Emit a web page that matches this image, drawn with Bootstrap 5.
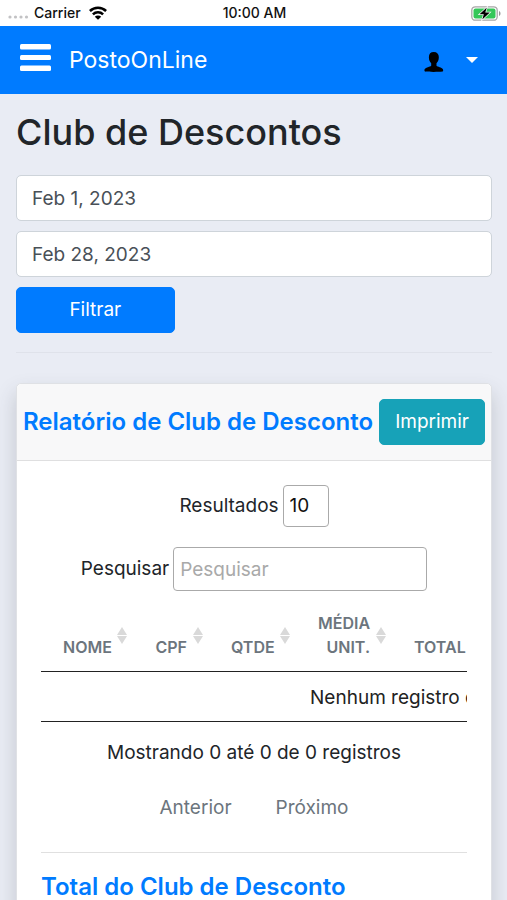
<!DOCTYPE html>
<html lang="pt-BR">
<head>
<meta charset="utf-8">
<meta name="viewport" content="width=device-width, initial-scale=1">
<title>PostoOnLine</title>
<link href="https://cdn.jsdelivr.net/npm/bootstrap@5.3.0/dist/css/bootstrap.min.css" rel="stylesheet">
<style>
body{font-family:Inter,"Liberation Sans",sans-serif;font-size:19px;line-height:30px;color:#212529;background:#e9ecf4}
.status{height:26px;font-size:14px;line-height:26px;font-weight:500;color:#111;padding:0 6px 0 8px}
.status>div{flex:1 1 0}
.topbar{background:#007bff;height:68px;padding:0 20px}
.brand{font-size:23px;margin-left:18px;color:#fff}
.account{gap:22px;margin-right:9px}
.page{padding:16px 15px 0 16px}
.page-title{font-size:36px;line-height:44px;font-weight:500;margin-bottom:21px}
.field{font-size:19px;line-height:32px;height:46px;padding:7px 15px;border-color:#ced4da;border-radius:5px;color:#495057;margin-bottom:10px}
.btn{font-size:19px;line-height:32px;height:46px;border-radius:5px;--bs-btn-padding-x:15px}
.btn-filter{width:33.333%;background:#007bff;border-color:#007bff}
.btn-print{background:#17a2b8;border-color:#17a2b8;color:#fff}
.rule{margin:19px 0 30px;border-color:#000;opacity:.04}
.panel{border:1px solid #dfe1e5;border-radius:5px;box-shadow:0 10px 20px rgba(58,65,75,.22)}
.panel-head{background:#f8f8f9;border-bottom:1px solid #dfdfe0;padding:15px 6px;border-radius:5px 5px 0 0}
.panel-title{font-size:24px;line-height:30px;font-weight:600;color:#007bff;margin:0}
.panel-content{padding:24px}
.control{border:1px solid #aaa;border-radius:4px;background:#fff;color:#111;padding:5px 6px;font-size:19px;line-height:30px}
.count{appearance:none;width:46px;height:42px}
.search{width:254px;height:44px}
.search::placeholder{color:#a9a9a9}
.report{table-layout:fixed;width:796px;margin:0}
.report th{position:relative;padding:12px 22px;font-size:16px;line-height:24px;font-weight:600;color:#6c757d;text-align:right;vertical-align:bottom;border-bottom:1px solid #222}
.report td{padding:11px 10px 9px;line-height:29px;border-bottom:1px solid #222;text-align:center;color:#222}
.report svg{position:absolute;right:6px;bottom:27px}
.c-name{width:92px}.c-cpf{width:76px}.c-qty{width:87px}.c-avg{width:96px}.c-total{width:95px}
.info{margin-top:16px}
.pager{margin-top:17px}
.pager .page-link{border:0;padding:8px 22px;color:#6c757d;background:none;line-height:30px;font-size:19px}
.divider{margin:21px 0 19px;border-color:#000;opacity:.12}
</style>
<script src="https://cdn.jsdelivr.net/npm/bootstrap@5.3.0/dist/js/bootstrap.bundle.min.js" defer></script>
</head>
<body>
<svg class="d-none"><symbol id="sort" viewBox="0 0 10 17"><path fill="#d9d9d9" d="M5 0 10 8H0zM0 9h10l-5 8z"/></symbol></svg>
<div class="status bg-white d-flex align-items-center">
  <div class="d-flex align-items-center">
    <svg width="22" height="26" fill="#c2c2c4" aria-hidden="true"><circle cx="2" cy="17" r="1.600"/><circle cx="7.500" cy="17" r="1.600"/><circle cx="13" cy="17" r="1.600"/><circle cx="18.500" cy="17" r="1.600"/></svg>
    <span class="ms-1">Carrier</span>
    <svg class="ms-2" width="18" height="14" viewBox="0 0 18 14" fill="none" stroke="#000" stroke-width="2.500" aria-label="Wi-Fi"><path d="M.9 5a11.500 11.500 0 0 1 16.200 0M3.900 8.300a7.300 7.300 0 0 1 10.200 0"/><path fill="#000" stroke="none" d="M9 13.800 5.800 10.700a4.600 4.600 0 0 1 6.400 0z"/></svg>
  </div>
  <span>10:00 AM</span>
  <div class="d-flex justify-content-end">
    <svg width="30" height="15" viewBox="0 0 30 15" aria-label="Bateria"><rect x=".8" y=".8" width="25.400" height="13.400" rx="3.500" fill="#fff" stroke="#a6a6a6" stroke-width="1.300"/><rect x="2.500" y="2.500" width="22" height="10" rx="2" fill="#35c759"/><path d="M28 5v5c2-.8 2-4.200 0-5z" fill="#999"/><path d="M15.800 1.500 8.500 8.300h4.300l-1.500 5.200 7.500-7h-4.500z" fill="#000" stroke="#fff" stroke-width="1.400" paint-order="stroke"/></svg>
  </div>
</div>
<nav class="topbar d-flex align-items-center justify-content-between">
  <div class="d-flex align-items-center">
    <button class="border-0 bg-transparent p-0 d-flex" type="button" aria-label="Menu"><svg width="31" height="34" fill="#fff"><rect width="31" height="5.500" y="1" rx="1.500"/><rect y="12" width="31" height="5" rx="1.500"/><rect y="22.500" width="31" height="5.500" rx="1.500"/></svg></button>
    <a class="brand text-decoration-none" href="#">PostoOnLine</a>
  </div>
  <button class="account border-0 bg-transparent p-0 d-flex align-items-center" type="button" aria-label="Conta">
    <svg class="mt-1" width="20" height="20" viewBox="0 0 20 20"><path d="M9.800 0C13.200 0 15 2.200 14.800 5.600c0 2.300-.8 4.200-2.300 5.600v2.600c1.200 1.200 5.200 1.400 6.300 3.300.5.900.6 2-.3 2.500-4 .5-14 .5-17.500 0-.8-.6-.7-1.700-.2-2.500C2 15.200 6 15 7.200 13.800v-2.600C5.700 9.800 4.900 7.900 4.900 5.600 4.700 2.200 6.400 0 9.800 0z"/></svg>
    <svg width="12" height="6"><path fill="#fff" d="M0 0h12L6 6z"/></svg>
  </button>
</nav>
<main class="page">
  <h1 class="page-title">Club de Descontos</h1>
  <form>
    <input class="form-control field" type="text" value="Feb 1, 2023" aria-label="Data inicial">
    <input class="form-control field" type="text" value="Feb 28, 2023" aria-label="Data final">
    <button class="btn btn-primary btn-filter" type="button">Filtrar</button>
  </form>
  <hr class="rule">
  <section class="panel bg-white">
    <header class="panel-head d-flex align-items-center justify-content-between">
      <h2 class="panel-title text-nowrap">Relatório de Club de Desconto</h2>
      <button class="btn btn-print" type="button">Imprimir</button>
    </header>
    <div class="panel-content">
      <div class="d-flex justify-content-center align-items-center gap-1">
        <label for="count">Resultados</label>
        <select class="control count" id="count"><option>10</option></select>
      </div>
      <div class="d-flex justify-content-center align-items-center gap-1 mt-3 pt-1">
        <label for="search">Pesquisar</label>
        <input class="control search" id="search" type="search" placeholder="Pesquisar">
      </div>
      <div class="overflow-hidden mt-2">
        <table class="report">
          <colgroup><col class="c-name"><col class="c-cpf"><col class="c-qty"><col class="c-avg"><col class="c-total"><col></colgroup>
          <thead><tr>
            <th>NOME<svg width="10" height="17"><use href="#sort"/></svg></th>
            <th>CPF<svg width="10" height="17"><use href="#sort"/></svg></th>
            <th>QTDE<svg width="10" height="17"><use href="#sort"/></svg></th>
            <th>MÉDIA UNIT.<svg width="10" height="17"><use href="#sort"/></svg></th>
            <th>TOTAL</th><th></th>
          </tr></thead>
          <tbody><tr><td colspan="6">Nenhum registro encontrado</td></tr></tbody>
        </table>
      </div>
      <div class="info text-center">Mostrando 0 até 0 de 0 registros</div>
      <ul class="pager pagination justify-content-center mb-0">
        <li><a class="page-link" href="#">Anterior</a></li>
        <li><a class="page-link" href="#">Próximo</a></li>
      </ul>
      <hr class="divider">
      <h2 class="panel-title">Total do Club de Desconto</h2>
    </div>
  </section>
</main>
</body>
</html>
